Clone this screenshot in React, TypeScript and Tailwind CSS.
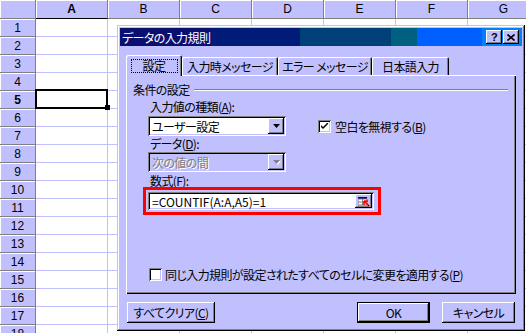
import React from 'react';

const COLS = ['A', 'B', 'C', 'D', 'E', 'F', 'G'];
const ROWS = Array.from({ length: 18 }, (_, i) => i + 1);

// classic 3d edges, face colour is the lavender scheme
const raised = 'shadow-[inset_-1px_-1px_0_#000,inset_1px_1px_0_#fff,inset_-2px_-2px_0_#808080]';
const sunken = 'shadow-[inset_1px_1px_0_#808080,inset_-1px_-1px_0_#fff,inset_2px_2px_0_#000,inset_-2px_-2px_0_#c0c0ff]';

function Sheet() {
  return (
    <div className="font-['Liberation_Sans',sans-serif] text-[12px] text-black">
      <div className="flex h-[19px]">
        <div className="h-full w-[36px] shrink-0 border-r border-b border-r-[#808080] border-b-[#808080] bg-[#c0c0ff] shadow-[inset_1px_1px_0_#fff]" />
        {COLS.map((c) => (
          <div
            key={c}
            className={`flex h-full w-[72px] shrink-0 items-center justify-center border-r border-b border-r-[#808080] bg-[#c0c0ff] shadow-[inset_1px_1px_0_#fff] ${
              c === 'A' ? 'border-b-black font-bold' : 'border-b-[#808080]'
            }`}
          >
            {c}
          </div>
        ))}
      </div>
      {ROWS.map((r) => (
        <div key={r} className="flex h-[18px]">
          <div
            className={`flex w-[36px] shrink-0 items-center justify-center border-r border-b border-b-[#808080] bg-[#c0c0ff] shadow-[inset_1px_1px_0_#fff] ${
              r === 5 ? 'border-r-black font-bold' : 'border-r-[#808080]'
            }`}
          >
            {r}
          </div>
          {COLS.map((c) => (
            <div key={c} className="w-[72px] shrink-0 border-r border-b border-r-[#c0c0ff] border-b-[#c0c0ff] bg-white" />
          ))}
        </div>
      ))}
    </div>
  );
}

function Arrow({ disabled }: { disabled?: boolean }) {
  return (
    <svg width="7" height="4" viewBox="0 0 7 4" className={disabled ? 'drop-shadow-[1px_1px_0_#fff]' : ''}>
      <polygon points="0,0 7,0 3.5,4" fill={disabled ? '#808080' : '#000'} />
    </svg>
  );
}

function Combo({ value, disabled }: { value: string; disabled?: boolean }) {
  return (
    <div className={`flex h-[20px] w-[138px] items-center p-[2px] ${sunken} ${disabled ? 'bg-[#c0c0ff]' : 'bg-white'}`}>
      <span
        className={`flex-1 pl-[2px] leading-[13px] ${
          disabled ? 'text-[#808080] [text-shadow:1px_1px_0_#fff]' : 'text-black'
        }`}
      >
        {value}
      </span>
      <div className={`flex h-[16px] w-[16px] items-center justify-center bg-[#c0c0ff] ${raised}`}>
        <Arrow disabled={disabled} />
      </div>
    </div>
  );
}

function Check({ checked }: { checked?: boolean }) {
  return (
    <div className={`flex h-[13px] w-[13px] shrink-0 items-center justify-center bg-white ${sunken}`}>
      {checked && (
        <svg width="7" height="7" viewBox="0 0 7 7">
          <path d="M0 2 L0 4 L2 6 L7 1 L7 -1 L2 4 Z" fill="#000" />
        </svg>
      )}
    </div>
  );
}

function CollapseIcon() {
  return (
    <svg width="12" height="11" viewBox="0 0 12 11">
      <rect x="0" y="1" width="9" height="2" fill="#000080" />
      <rect x="0" y="3" width="9" height="6" fill="#fff" stroke="#808080" strokeWidth="1" />
      <line x1="0" y1="6" x2="9" y2="6" stroke="#808080" />
      <line x1="4.5" y1="3" x2="4.5" y2="9" stroke="#808080" />
      <path d="M6 5 L11 10 M6 5 L6 9 M6 5 L10 5" stroke="#ff0000" strokeWidth="1.6" fill="none" />
      <rect x="10" y="9" width="1" height="1" fill="#000" />
    </svg>
  );
}

function Tab({ label, width, selected }: { label: string; width: string; selected?: boolean }) {
  if (selected) {
    return (
      <div
        className={`relative z-10 -mb-px flex h-[21px] ${width} justify-center rounded-t-[2px] bg-[#c0c0ff] pt-[4px] shadow-[inset_1px_1px_0_#fff,inset_-1px_0_0_#000,inset_-2px_0_0_#808080]`}
      >
        <span className="flex h-[14px] w-[47px] items-center justify-center border border-dotted border-black leading-[12px]">
          {label}
        </span>
      </div>
    );
  }
  return (
    <div
      className={`flex h-[18px] ${width} items-center justify-center rounded-t-[2px] bg-[#c0c0ff] pt-[1px] shadow-[inset_1px_1px_0_#fff,inset_-1px_0_0_#000,inset_-2px_0_0_#808080]`}
    >
      {label}
    </div>
  );
}

function Dialog() {
  return (
    <div
      className={`absolute top-[25px] left-[117px] flex h-[306px] w-[408px] flex-col bg-[#c0c0ff] p-[3px] font-['Noto_Sans_CJK_JP',sans-serif] text-[12px] leading-[13px] tracking-[-0.6px] text-black [font-feature-settings:'palt'] shadow-[inset_-1px_-1px_0_#000,inset_1px_1px_0_#c0c0ff,inset_-2px_-2px_0_#808080,inset_2px_2px_0_#fff]`}
    >
      {/* title bar */}
      <div className="flex h-[18px] items-center bg-[linear-gradient(to_right,#0a1070_0px,#0a1070_91px,#001c78_91px,#001c78_180px,#004078_180px,#004078_271px,#006080_271px,#006080_297px,#0060ff_297px,#0060ff_362px,#0080ff_362px)] pr-[3px] pl-[2px]">
        <span className="flex-1 text-white">データの入力規則</span>
        <div className={`flex h-[14px] w-[16px] items-center justify-center bg-[#c0c0ff] ${raised}`}>
          <span className="font-['Liberation_Sans',sans-serif] text-[11px] leading-[11px] font-bold">?</span>
        </div>
        <div className={`ml-[1px] flex h-[14px] w-[16px] items-center justify-center bg-[#c0c0ff] ${raised}`}>
          <svg width="8" height="7" viewBox="0 0 8 7">
            <path d="M0.5 0.5 L7.5 6.5 M7.5 0.5 L0.5 6.5" stroke="#000" strokeWidth="1.6" />
          </svg>
        </div>
      </div>

      <div className="flex flex-1 flex-col px-[6px] pt-[9px]">
        {/* tabs */}
        <div className="flex h-[20px] items-end">
          <Tab label="設定" width="w-[56px]" selected />
          <Tab label="入力時メッセージ" width="w-[96px]" />
          <Tab label="エラー メッセージ" width="w-[94px]" />
          <Tab label="日本語入力" width="w-[77px]" />
        </div>

        {/* tab panel */}
        <div className="flex h-[219px] flex-col shadow-[inset_1px_1px_0_#fff,inset_-1px_-1px_0_#000,inset_-2px_-2px_0_#808080]">
          <div className="mt-[8px] mr-[8px] ml-[7px] flex h-[13px] items-center">
            <span>条件の設定</span>
            <div className="ml-[4px] h-[2px] flex-1 border-t border-b border-t-[#808080] border-b-white" />
          </div>

          <div className="mt-[4px] ml-[24px] h-[13px]">
            入力値の種類(<u>A</u>):
          </div>
          <div className="mt-[3px] ml-[22px] flex h-[20px] items-center">
            <Combo value="ユーザー設定" />
            <div className="ml-[32px] flex items-center gap-[4px]">
              <Check checked />
              <span>
                空白を無視する(<u>B</u>)
              </span>
            </div>
          </div>

          <div className="mt-[1px] ml-[24px] h-[13px]">
            データ(<u>D</u>):
          </div>
          <div className="mt-[2px] ml-[22px]">
            <Combo value="次の値の間" disabled />
          </div>

          <div className="mt-[2px] ml-[24px] h-[13px]">
            数式(<u>F</u>):
          </div>
          <div className="ml-[17px] h-[28px] w-[238px] border-[3px] border-[#ff0000] pt-[2px] pr-[4px] pb-[2px] pl-[2px]">
            <div className={`flex h-[18px] w-[226px] items-center bg-white p-[2px] ${sunken}`}>
              <span className="flex-1 pl-[2px] tracking-normal">=COUNTIF(A:A,A5)=1</span>
              <div className={`flex h-[14px] w-[17px] items-center justify-center bg-[#c0c0ff] ${raised}`}>
                <CollapseIcon />
              </div>
            </div>
          </div>

          <div className="mt-[53px] ml-[23px] flex h-[13px] items-center gap-[3px]">
            <Check />
            <span>
              同じ入力規則が設定されたすべてのセルに変更を適用する(<u>P</u>)
            </span>
          </div>
        </div>

        {/* buttons */}
        <div className="mt-[8px] flex h-[21px]">
          <button className={`ml-[1px] flex w-[88px] items-center justify-center bg-[#c0c0ff] ${raised}`}>
            すべてクリア(<u>C</u>)
          </button>
          <button className="ml-auto flex w-[73px] items-center justify-center border border-black bg-[#c0c0ff] shadow-[inset_-1px_-1px_0_#000,inset_1px_1px_0_#fff,inset_-2px_-2px_0_#808080]">
            OK
          </button>
          <button className={`mr-[1px] ml-[12px] flex w-[73px] items-center justify-center bg-[#c0c0ff] ${raised}`}>
            キャンセル
          </button>
        </div>
      </div>
    </div>
  );
}

export default function App() {
  return (
    <div className="relative h-[333px] w-[526px] overflow-hidden bg-white">
      <Sheet />
      {/* active cell A5 */}
      <div className="absolute top-[89px] left-[35px] h-[20px] w-[73px] border-2 border-black" />
      <div className="absolute top-[105px] left-[105px] h-[5px] w-[5px] bg-black" />
      <Dialog />
    </div>
  );
}
